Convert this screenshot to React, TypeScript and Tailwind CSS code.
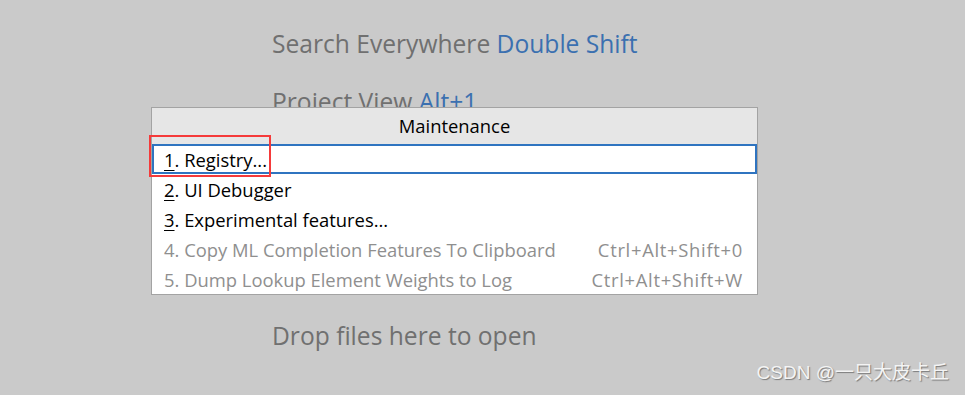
const items = [
  { n: '1', label: 'Registry...', enabled: true, selected: true },
  { n: '2', label: 'UI Debugger', enabled: true },
  { n: '3', label: 'Experimental features...', enabled: true },
  { n: '4', label: 'Copy ML Completion Features To Clipboard', enabled: false, shortcut: 'Ctrl+Alt+Shift+0' },
  { n: '5', label: 'Dump Lookup Element Weights to Log', enabled: false, shortcut: 'Ctrl+Alt+Shift+W' },
];

export default function App() {
  return (
    <div
      className="relative w-[965px] h-[395px] overflow-hidden bg-[#cacaca]"
      style={{ fontFamily: '"Open Sans", "Noto Sans", sans-serif' }}
    >
      <div className="flex flex-col pl-[272px] pt-[26px] text-[24.6px] text-[#707070] leading-[36px]">
        <div>
          Search Everywhere <span className="text-[#3b70b0]">Double Shift</span>
        </div>
        <div className="mt-[22px]">
          Project View <span className="text-[#3b70b0]">Alt+1</span>
        </div>
        <div className="mt-[198px]">Drop files here to open</div>
      </div>

      {/* popup */}
      <div className="absolute left-[151px] top-[107px] w-[607px] border border-[#a3a3a3] bg-white">
        <div className="h-[36px] flex items-center justify-center bg-[#e6e6e6] text-[18.4px] text-black">
          Maintenance
        </div>
        <div>
          {items.map((it) => (
            <div
              key={it.n}
              className={
                'h-[30px] flex items-center justify-between pl-[10px] pr-[12px] pt-[1px] text-[18.4px] ' +
                (it.selected ? 'border-2 border-[#2f74c0]' : 'border-2 border-transparent') +
                (it.enabled ? ' text-black' : ' text-[#8f8f8f]')
              }
            >
              <span>
                {it.enabled ? <span className="underline underline-offset-[3px]">{it.n}</span> : it.n}. {it.label}
              </span>
              {it.shortcut && <span className="tracking-[0.7px]">{it.shortcut}</span>}
            </div>
          ))}
        </div>
      </div>

      {/* annotation */}
      <div className="absolute left-[149px] top-[135px] w-[122px] h-[42px] border-2 border-[#f53a3a]" />

      <div
        className="absolute right-[16px] bottom-[8px] text-[19px] text-[#f4f4f4]"
        style={{ fontFamily: '"Liberation Sans", "Noto Sans CJK SC", sans-serif', textShadow: '1px 1px 1px #7a7a7a' }}
      >
        CSDN @一只大皮卡丘
      </div>
    </div>
  );
}
